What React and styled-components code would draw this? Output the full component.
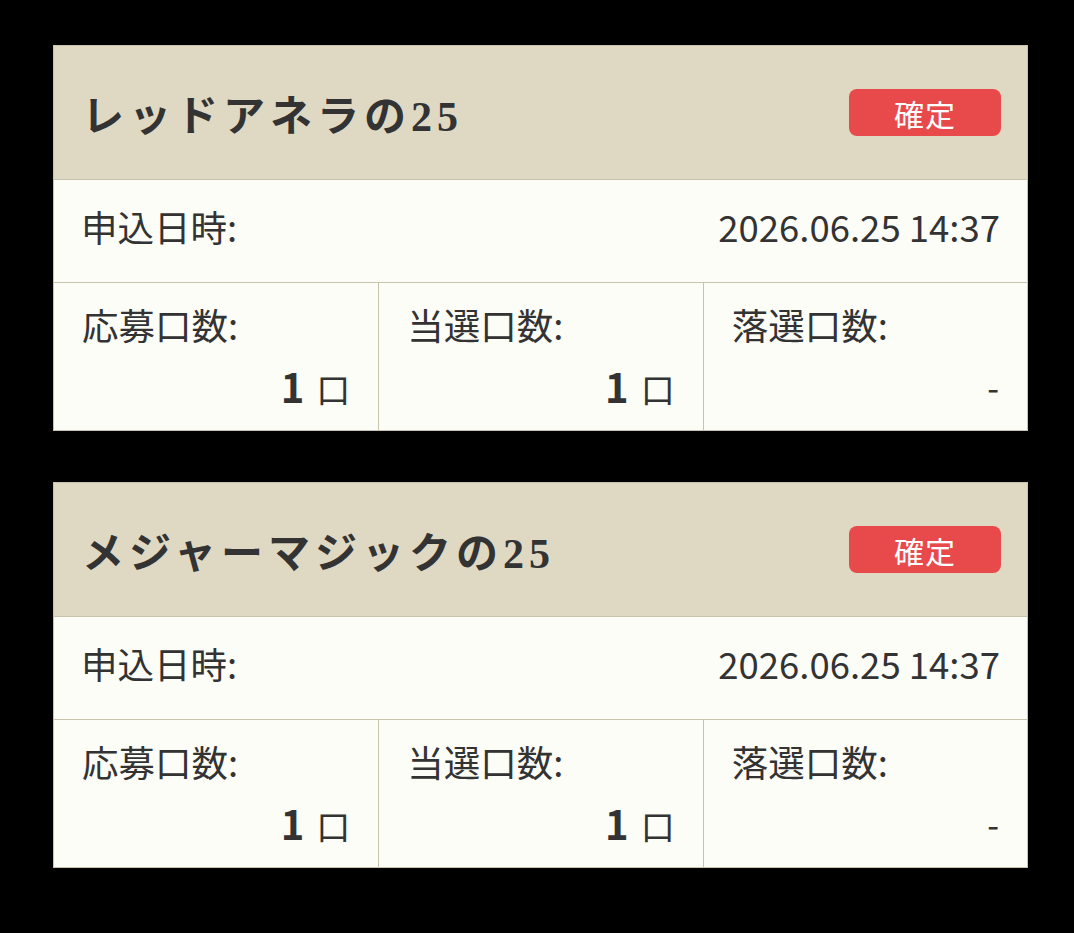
import React from 'react'
import styled, { createGlobalStyle } from 'styled-components'

const GlobalStyle = createGlobalStyle`
  html, body {
    margin: 0;
    background: #000;
  }
  body {
    font-family: "Noto Sans CJK JP", "Noto Sans", sans-serif;
    color: #333;
  }
`

const Page = styled.main`
  min-height: 100vh;
  box-sizing: border-box;
  padding: 45px 46px 40px 53px;
  display: flex;
  flex-direction: column;
  gap: 51px;
`

const Card = styled.section`
  border: 1px solid #c8c3aa;
  background: #fdfdf7;
`

const CardHeader = styled.header`
  height: 134px;
  box-sizing: border-box;
  display: flex;
  align-items: center;
  justify-content: space-between;
  padding: 0 26px 0 28px;
  background: #dfd9c3;
  border-bottom: 1px solid #c8c3aa;
`

const Title = styled.h2`
  margin: 0;
  font-family: "Liberation Serif", "Noto Sans CJK JP", serif;
  font-weight: 600;
  font-size: 42px;
  letter-spacing: 5px;
  color: #333;
`

const Badge = styled.span`
  width: 152px;
  height: 47px;
  display: flex;
  align-items: center;
  justify-content: center;
  border-radius: 8px;
  background: #e84a4c;
  color: #fff;
  font-size: 30px;
  letter-spacing: 1px;
`

const DateRow = styled.div`
  height: 103px;
  box-sizing: border-box;
  display: flex;
  align-items: center;
  justify-content: space-between;
  padding: 0 27px 10px 27px;
  border-bottom: 1px solid #c8c3aa;
  font-size: 36.5px;
`

const Stats = styled.div`
  display: grid;
  grid-template-columns: repeat(3, 1fr);
`

const Stat = styled.div`
  display: flex;
  flex-direction: column;
  padding: 15px 28px 17px 28px;
  border-left: ${p => (p.first ? 'none' : '1px solid #c8c3aa')};
`

const StatLabel = styled.span`
  font-size: 36.5px;
  line-height: 54px;
`

const StatValue = styled.span`
  margin-top: 8px;
  text-align: right;
  font-size: 34px;
  line-height: 53px;
  height: 53px;
`

const Num = styled.b`
  font-weight: 700;
  font-size: 40px;
`

const Unit = styled.span`
  margin-left: 12px;
  font-size: 34px;
`

const entries = [
  { title: 'レッドアネラの25', date: '2026.06.25 14:37', applied: 1, won: 1, lost: null },
  { title: 'メジャーマジックの25', date: '2026.06.25 14:37', applied: 1, won: 1, lost: null },
]

const Count = ({ n }) =>
  n == null ? <StatValue>-</StatValue> : (
    <StatValue>
      <Num>{n}</Num>
      <Unit>口</Unit>
    </StatValue>
  )

const App = () => (
  <>
    <GlobalStyle />
    <Page>
      {entries.map(e => (
        <Card key={e.title}>
          <CardHeader>
            <Title>{e.title}</Title>
            <Badge>確定</Badge>
          </CardHeader>
          <DateRow>
            <span>申込日時:</span>
            <span>{e.date}</span>
          </DateRow>
          <Stats>
            <Stat first>
              <StatLabel>応募口数:</StatLabel>
              <Count n={e.applied} />
            </Stat>
            <Stat>
              <StatLabel>当選口数:</StatLabel>
              <Count n={e.won} />
            </Stat>
            <Stat>
              <StatLabel>落選口数:</StatLabel>
              <Count n={e.lost} />
            </Stat>
          </Stats>
        </Card>
      ))}
    </Page>
  </>
)

export default App
